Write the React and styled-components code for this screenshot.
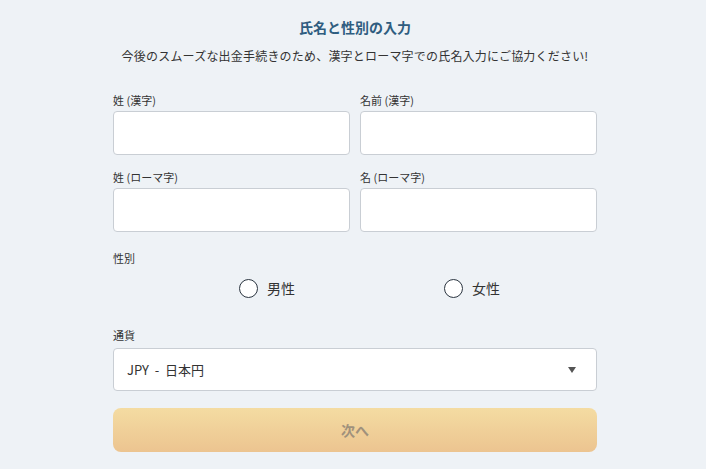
import React from "react";
import styled, { createGlobalStyle } from "styled-components";

const Global = createGlobalStyle`
  html, body {
    margin: 0;
    padding: 0;
    background: #eef2f6;
  }
  body {
    font-family: "Noto Sans CJK JP", "Noto Sans", sans-serif;
    color: #333;
  }
`;

const Page = styled.div`
  width: 706px;
  height: 469px;
  box-sizing: border-box;
  padding: 17px 109px 0 113px;
  background: #eef2f6;
  overflow: hidden;
`;

const Title = styled.h1`
  margin: 0;
  font-size: 14px;
  line-height: 20px;
  font-weight: 700;
  color: #2f5d80;
  text-align: center;
`;

const Lead = styled.p`
  margin: 10px -20px 0;
  font-size: 12px;
  letter-spacing: 0.2px;
  line-height: 18px;
  color: #333;
  text-align: center;
`;

const Grid = styled.div`
  display: grid;
  grid-template-columns: 1fr 1fr;
  column-gap: 10px;
  row-gap: 14px;
  margin-top: 27px;
`;

const Field = styled.div`
  display: flex;
  flex-direction: column;
`;

const Label = styled.label`
  display: block;
  font-size: 11px;
  line-height: 16px;
  color: #333;
  margin-bottom: ${(p) => p.$gap || 3}px;
`;

const Input = styled.input`
  box-sizing: border-box;
  height: 44px;
  width: 100%;
  border: 1px solid #c9ced4;
  border-radius: 4px;
  background: #fff;
  font: inherit;
  padding: 0 12px;
  outline: none;
`;

const Section = styled.div`
  margin-top: ${(p) => p.$top}px;
`;

const RadioRow = styled.div`
  display: grid;
  grid-template-columns: 205px auto;
  padding-left: 126px;
  margin-top: 12px;
  height: 20px;
  align-items: center;
`;

const RadioItem = styled.label`
  display: flex;
  align-items: center;
  gap: 9px;
  font-size: 14px;
  line-height: 20px;
  color: #333;
`;

const Circle = styled.span`
  box-sizing: border-box;
  width: 19px;
  height: 19px;
  border-radius: 50%;
  border: 1.5px solid #2b3540;
  background: #fff;
`;

const Select = styled.div`
  box-sizing: border-box;
  height: 43px;
  display: flex;
  align-items: center;
  justify-content: space-between;
  padding: 0 20px 0 13px;
  border: 1px solid #c9ced4;
  border-radius: 4px;
  background: #fff;
  font-size: 13px;
  color: #333;
`;

const Caret = styled.span`
  width: 0;
  height: 0;
  border-left: 4px solid transparent;
  border-right: 4px solid transparent;
  border-top: 6px solid #555;
`;

const Next = styled.button`
  display: block;
  width: 100%;
  height: 44px;
  margin-top: 17px;
  border: none;
  border-radius: 8px;
  background: linear-gradient(to bottom, #f4dca2, #ecc490);
  color: #a0917c;
  font-family: inherit;
  font-size: 14px;
  font-weight: 700;
  cursor: default;
`;

export default function App() {
  return (
    <Page>
      <Global />
      <Title>氏名と性別の入力</Title>
      <Lead>今後のスムーズな出金手続きのため、漢字とローマ字での氏名入力にご協力ください!</Lead>
      <Grid>
        <Field>
          <Label>姓 (漢字)</Label>
          <Input />
        </Field>
        <Field>
          <Label>名前 (漢字)</Label>
          <Input />
        </Field>
        <Field>
          <Label>姓 (ローマ字)</Label>
          <Input />
        </Field>
        <Field>
          <Label>名 (ローマ字)</Label>
          <Input />
        </Field>
      </Grid>
      <Section $top={18}>
        <Label>性別</Label>
        <RadioRow>
          <RadioItem>
            <Circle />
            男性
          </RadioItem>
          <RadioItem>
            <Circle />
            女性
          </RadioItem>
        </RadioRow>
      </Section>
      <Section $top={29}>
        <Field>
          <Label $gap={5}>通貨</Label>
          <Select>
            <span>JPY&nbsp;&nbsp;-&nbsp;&nbsp;日本円</span>
            <Caret />
          </Select>
        </Field>
      </Section>
      <Next>次へ</Next>
    </Page>
  );
}
